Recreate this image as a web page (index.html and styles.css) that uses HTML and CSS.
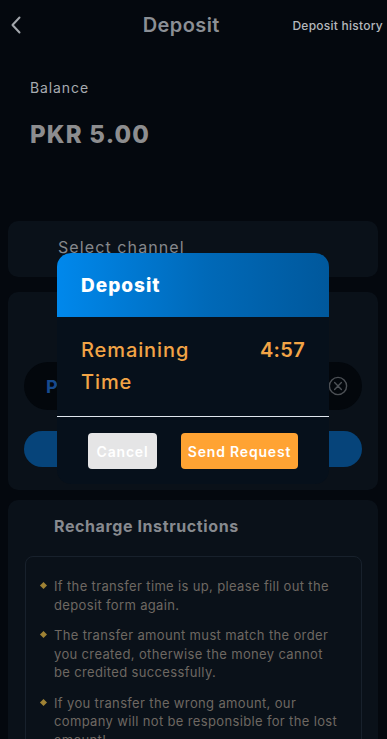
FILE: index.html
```html
<!DOCTYPE html>
<html lang="en">
<head>
<meta charset="utf-8">
<title>Deposit</title>
<link rel="stylesheet" href="styles.css">
</head>
<body>
<div class="page">
  <header class="topbar">
    <button class="back" aria-label="Back">
      <svg width="12" height="18" viewBox="0 0 12 18"><path d="M9.5 1.5 L2.5 9 L9.5 16.5" fill="none" stroke="currentColor" stroke-width="2" stroke-linecap="round" stroke-linejoin="round"/></svg>
    </button>
    <h1 class="title">Deposit</h1>
    <a class="history">Deposit history</a>
  </header>

  <section class="balance">
    <div class="balance-label">Balance</div>
    <div class="balance-amount">PKR 5.00</div>
  </section>

  <section class="card channel">
    <div class="channel-label">Select channel</div>
  </section>

  <section class="card form">
    <div class="amount-row">
      <span class="amount-value">PKR</span>
      <span class="clear">
        <svg width="20" height="20" viewBox="0 0 20 20"><circle cx="10" cy="10" r="8.6" fill="none" stroke="currentColor" stroke-width="1.4"/><path d="M6.6 6.6 L13.4 13.4 M13.4 6.6 L6.6 13.4" stroke="currentColor" stroke-width="1.4" stroke-linecap="round"/></svg>
      </span>
    </div>
    <div class="submit"></div>
  </section>

  <section class="card instructions">
    <h2 class="ins-title">Recharge Instructions</h2>
    <ul class="rules">
      <li>If the transfer time is up, please fill out the deposit form again.</li>
      <li>The transfer amount must match the order you created, otherwise the money cannot be credited successfully.</li>
      <li>If you transfer the wrong amount, our company will not be responsible for the lost amount!</li>
    </ul>
  </section>
</div>

<div class="overlay">
  <div class="modal">
    <div class="modal-head">Deposit</div>
    <div class="modal-body">
      <div class="remain">Remaining<br>Time</div>
      <div class="timer">4:57</div>
    </div>
    <div class="modal-actions">
      <button class="btn cancel">Cancel</button>
      <button class="btn send">Send Request</button>
    </div>
  </div>
</div>
</body>
</html>
```

FILE: styles.css
```css
* { box-sizing: border-box; }
html, body { margin: 0; padding: 0; }
body {
  background: #04080e;
  font-family: "Inter", "Noto Sans", sans-serif;
  width: 387px;
  height: 739px;
  overflow: hidden;
  position: relative;
}
.page {
  display: flex;
  flex-direction: column;
  padding: 0 9px 0 8px;
}
.topbar {
  display: flex;
  align-items: center;
  height: 50px;
  margin: 0 -5px 0 -8px;
  padding: 0 0 0 10px;
}
.back {
  background: none;
  border: 0;
  padding: 0;
  color: #a3a7ac;
  display: flex;
  width: 14px;
}
.title {
  flex: 1;
  margin: 0;
  text-align: center;
  font-size: 20px;
  font-weight: 600;
  color: #8b8f95;
  padding-left: 46px;
  letter-spacing: 0.4px;
}
.history {
  font-size: 12px;
  color: #b4b8bd;
  font-weight: 500;
  letter-spacing: 0.25px;
}
.balance {
  padding: 28px 0 0 22px;
  height: 171px;
}
.balance-label {
  font-size: 14px;
  color: #a7abb0;
  line-height: 20px;
  letter-spacing: 0.9px;
}
.balance-amount {
  margin-top: 22px;
  font-size: 24px;
  font-weight: 800;
  color: #8d8d8f;
  letter-spacing: 1.2px;
}
.card {
  background: #0a1119;
  border-radius: 10px;
}
.channel {
  height: 56px;
  padding: 16px 0 0 50px;
}
.channel-label {
  font-size: 16px;
  color: #85888c;
  letter-spacing: 1.1px;
}
.form {
  margin-top: 15px;
  height: 198px;
  padding: 70px 16px 0 16px;
  display: flex;
  flex-direction: column;
}
.amount-row {
  height: 48px;
  border-radius: 24px;
  background: #03070c;
  display: flex;
  align-items: center;
  justify-content: space-between;
  padding: 0 14px 0 22px;
}
.amount-value {
  font-size: 18px;
  font-weight: 700;
  color: #164a8e;
}
.clear {
  color: #4c5055;
  display: flex;
}
.submit {
  margin-top: 21px;
  height: 36px;
  border-radius: 18px;
  background: #06447a;
}
.instructions {
  margin-top: 10px;
  padding: 16px 16px 0 17px;
  height: 260px;
}
.ins-title {
  margin: 0 0 20px 29px;
  font-size: 16px;
  font-weight: 700;
  color: #878a8f;
  letter-spacing: 0.6px;
}
.rules {
  list-style: none;
  margin: 0;
  border: 1px solid #18212c;
  border-radius: 8px;
  padding: 20px 20px 0 14px;
  height: 200px;
}
.rules li {
  position: relative;
  padding-left: 14px;
  font-size: 13px;
  line-height: 18.5px;
  color: #6e6862;
  margin-bottom: 12px;
  letter-spacing: 0.35px;
}
.rules li::before {
  content: "";
  position: absolute;
  left: 1px;
  top: 6px;
  width: 5px;
  height: 5px;
  background: #9f8234;
  transform: rotate(45deg);
}
.overlay {
  position: absolute;
  inset: 0;
}
.modal {
  position: absolute;
  left: 57px;
  top: 253px;
  width: 272px;
  background: #06101b;
  border-radius: 14px;
  overflow: hidden;
}
.modal-head {
  height: 64px;
  background: linear-gradient(90deg, #0088ec 0%, #0069b8 55%, #00589c 100%);
  color: #fff;
  font-size: 19px;
  font-weight: 800;
  letter-spacing: 1px;
  padding: 0 24px;
  display: flex;
  align-items: center;
}
.modal-body {
  display: flex;
  justify-content: space-between;
  padding: 17px 24px 0 24px;
  height: 100px;
  border-bottom: 1.5px solid #dfe6ee;
  color: #f2a446;
  font-size: 20px;
  font-weight: 500;
  line-height: 32px;
}
.remain { letter-spacing: 0.9px; }
.timer { font-weight: 600; letter-spacing: 0.3px; }
.modal-actions {
  display: flex;
  justify-content: center;
  gap: 24px;
  padding: 16px 0 15px;
}
.btn {
  border: 0;
  height: 36px;
  border-radius: 4px;
  color: #fff;
  font-family: inherit;
  font-size: 14px;
  font-weight: 600;
  letter-spacing: 0.8px;
  padding: 0;
}
.cancel { width: 69px; background: #e5e5e6; }
.send { width: 117px; background: #ffa333; }
```
